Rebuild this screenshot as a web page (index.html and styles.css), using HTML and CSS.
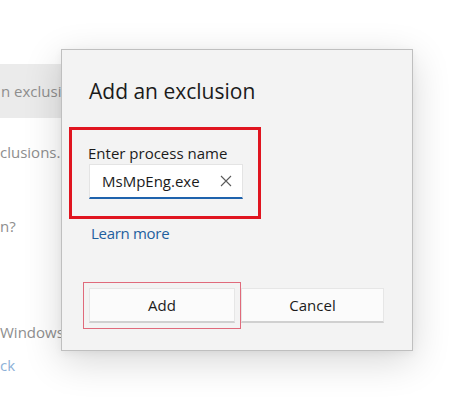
FILE: index.html
```html
<!DOCTYPE html>
<html>
<head>
<meta charset="utf-8">
<link rel="stylesheet" href="styles.css">
</head>
<body>
<div class="page">
  <div class="bg">
    <div class="strip"><span>n exclusion</span></div>
    <div class="bgline l2">clusions.</div>
    <div class="bgline l3">n?</div>
    <div class="bgline l4">Windows</div>
    <div class="bgline l5 link">ck</div>
  </div>
  <div class="dialog">
    <h1 class="title">Add an exclusion</h1>
    <div class="mark">
      <label class="label">Enter process name</label>
      <div class="input">
        <span class="value">MsMpEng.exe</span>
        <svg class="clear" width="12" height="12" viewBox="0 0 12 12"><path d="M1 1L11 11M11 1L1 11" stroke="#5a5a5a" stroke-width="1.1" fill="none"/></svg>
      </div>
    </div>
    <a class="learn">Learn more</a>
    <div class="buttons">
      <button class="btn add">Add</button>
      <button class="btn">Cancel</button>
    </div>
  </div>
</div>
</body>
</html>
```

FILE: styles.css
```css
html, body {
  margin: 0;
  padding: 0;
  background: #ffffff;
}
.page {
  position: relative;
  width: 474px;
  height: 402px;
  overflow: hidden;
  font-family: "Open Sans", "Noto Sans", sans-serif;
}
.bg {
  display: flex;
  flex-direction: column;
  padding-top: 64px;
  width: 80px;
}
.strip {
  height: 54px;
  background: #ebebeb;
  display: flex;
  align-items: center;
  font-size: 15px;
  color: #8e8e8e;
  white-space: nowrap;
  padding-left: 1px;
}
.bgline {
  font-size: 15px;
  line-height: 20px;
  height: 20px;
  color: #8e8e8e;
  white-space: nowrap;
}
.l2 { margin-top: 24px; }
.l3 { margin-top: 54px; }
.l4 { margin-top: 86px; }
.l5 { margin-top: 13px; }
.link { color: #8db1d8; }
.dialog {
  position: absolute;
  left: 61px;
  top: 49px;
  width: 350px;
  height: 300px;
  background: #f3f3f3;
  border: 1px solid #bfbfbf;
  box-shadow: 0 10px 36px rgba(0,0,0,0.16), 0 2px 8px rgba(0,0,0,0.05);
  display: flex;
  flex-direction: column;
}
.title {
  margin: 26px 0 0 27px;
  font-size: 21px;
  font-weight: 400;
  line-height: 30px;
  color: #1b1b1b;
}
.mark {
  margin: 21px 0 0 7px;
  width: 170px;
  border: 3px solid #e0141f;
  padding: 13px 0 17px 16px;
  display: flex;
  flex-direction: column;
}
.label {
  font-size: 15px;
  line-height: 20px;
  color: #1b1b1b;
  margin-bottom: 1px;
}
.input {
  width: 154px;
  height: 35px;
  box-sizing: border-box;
  background: #ffffff;
  border: 1px solid #e4e4e4;
  border-bottom: 2px solid #1f63ad;
  display: flex;
  align-items: center;
  padding: 0 10px 0 12px;
  margin-left: 1px;
}
.value {
  flex: 1;
  font-size: 15px;
  color: #1b1b1b;
}
.clear {
  flex: none;
}
.learn {
  margin: 4px 0 0 29px;
  font-size: 15px;
  line-height: 20px;
  color: #1f5f9e;
  letter-spacing: -0.3px;
}
.buttons {
  margin: 45px 0 0 27px;
  width: 295px;
  display: grid;
  grid-template-columns: 146px 143px;
  gap: 6px;
}
.btn {
  height: 35px;
  font-family: "Open Sans", "Noto Sans", sans-serif;
  font-size: 15px;
  color: #1b1b1b;
  background: #fbfbfb;
  border: 1px solid #e6e6e6;
  border-bottom: 2px solid #d0d0d0;
  padding: 0;
}
.add {
  outline: 1px solid #e06a7b;
  outline-offset: 5px;
}
```
